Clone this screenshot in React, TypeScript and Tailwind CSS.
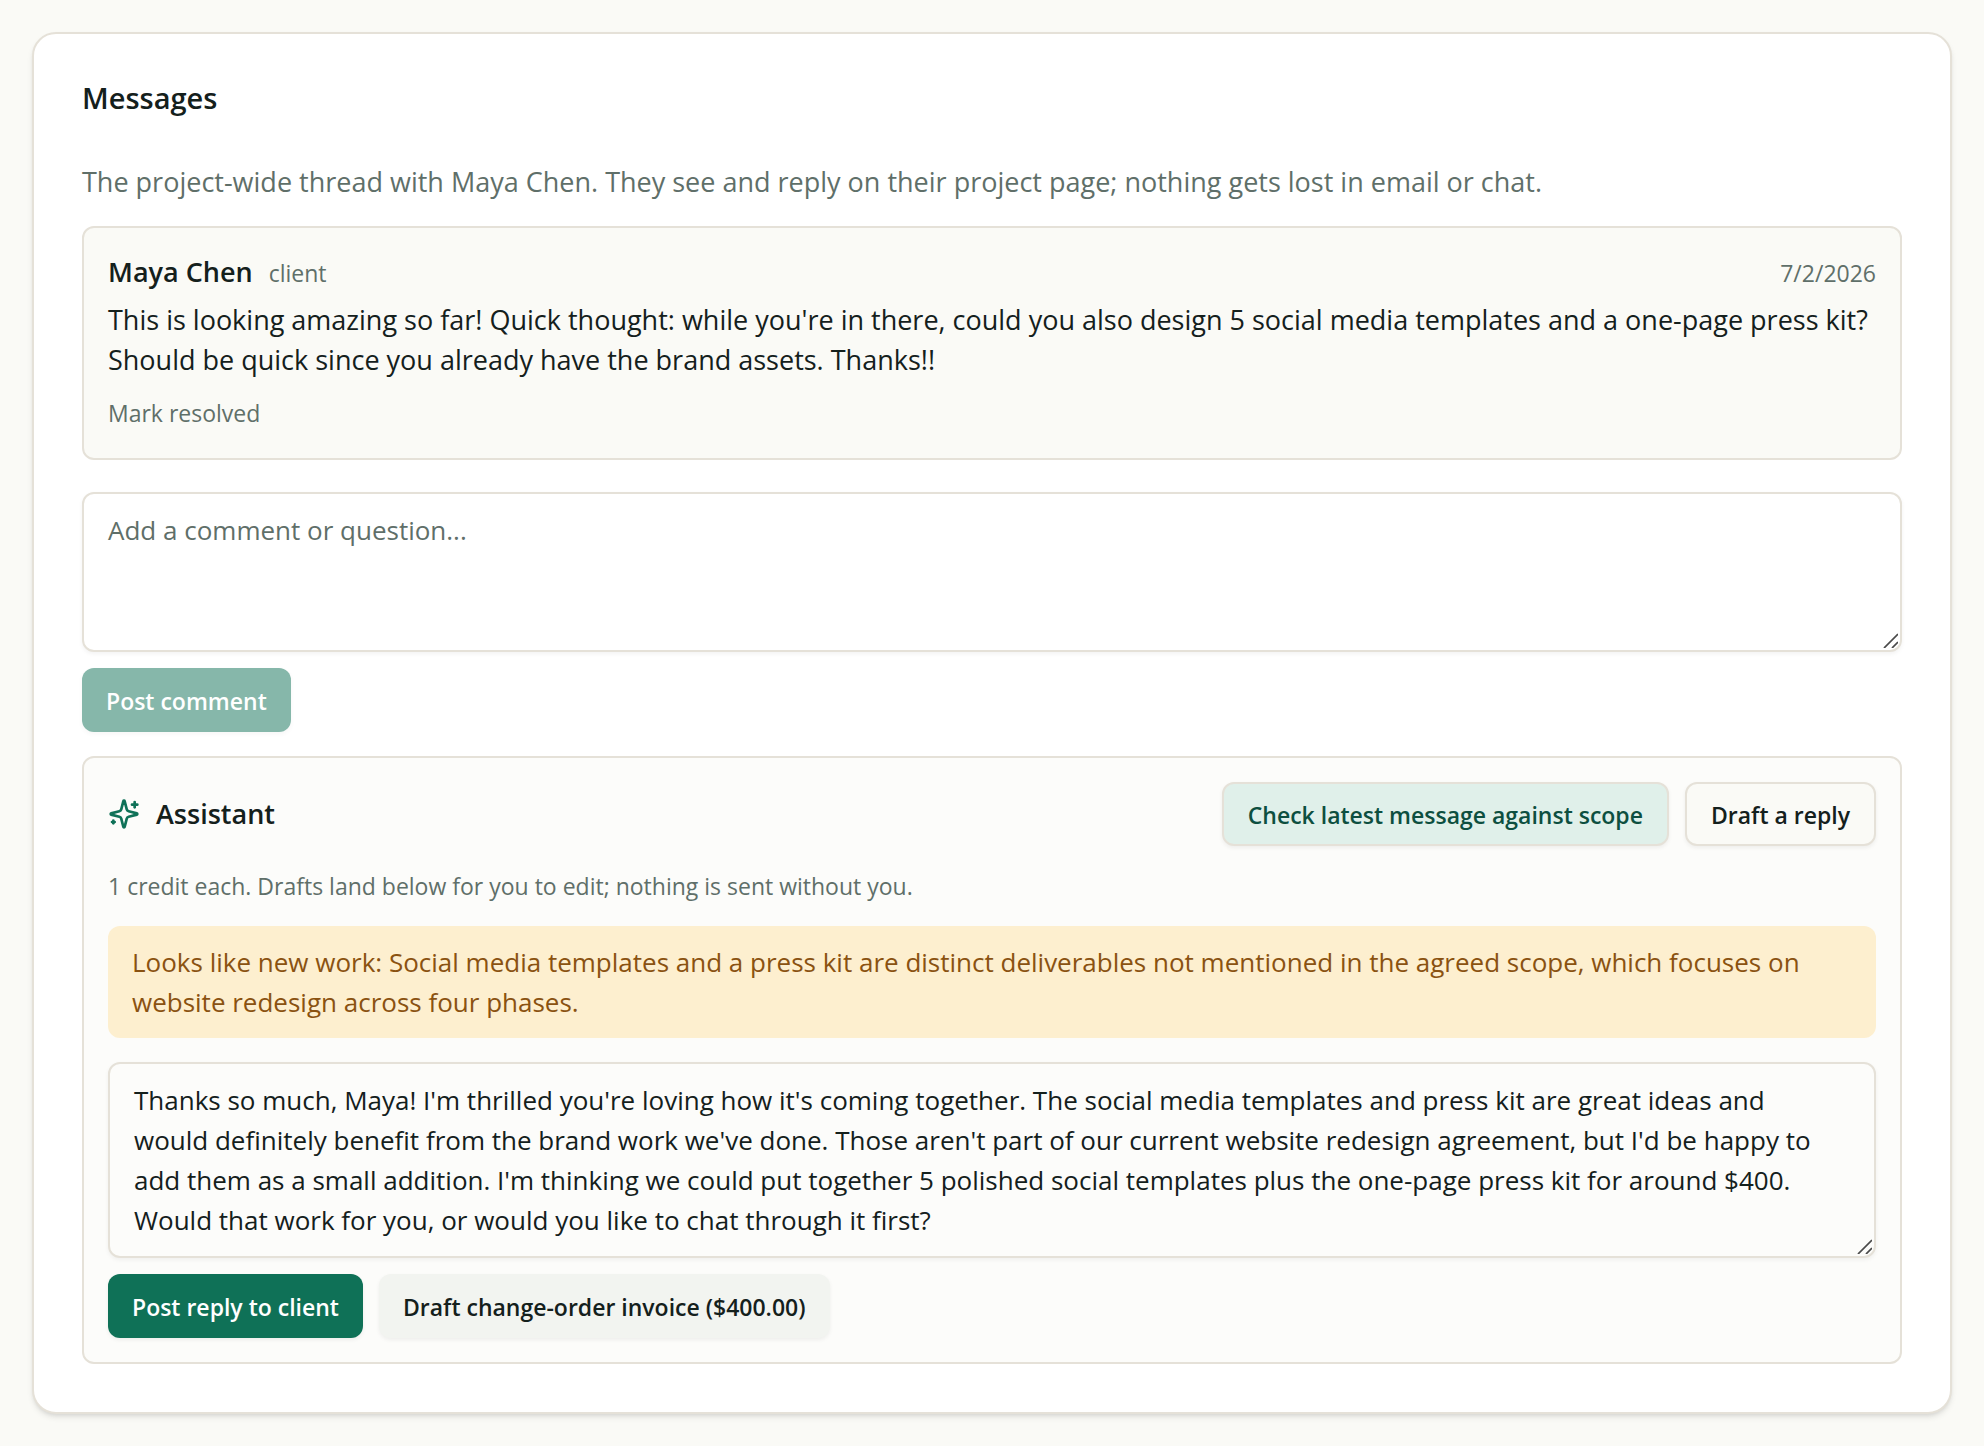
import { useState } from "react";
import type { ComponentProps } from "react";
import clsx from "clsx";

const DRAFT_REPLY =
  "Thanks so much, Maya! I'm thrilled you're loving how it's coming together. The social media templates and press kit are great ideas and would definitely benefit from the brand work we've done. Those aren't part of our current website redesign agreement, but I'd be happy to add them as a small addition. I'm thinking we could put together 5 polished social templates plus the one-page press kit for around $400. Would that work for you, or would you like to chat through it first?";

const buttonVariants = {
  primary: "bg-[#0f7157] text-white",
  accent: "border-2 border-[#e5e1d8] bg-[#e0f0ea] text-[#0d4f40]",
  outline: "border-2 border-[#e5e1d8] bg-[#fafaf6] text-[#14201c]",
  secondary: "bg-[#f2f4f0] text-[#14201c]",
};

function Button({
  variant,
  className,
  ...props
}: ComponentProps<"button"> & { variant: keyof typeof buttonVariants }) {
  return (
    <button
      type="button"
      className={clsx(
        "h-16 rounded-xl px-6 pt-px text-[23px] font-semibold whitespace-nowrap shadow-[0_2px_4px_rgba(0,0,0,0.06)] disabled:opacity-50",
        buttonVariants[variant],
        className
      )}
      {...props}
    />
  );
}

function Textarea({ className, ...props }: ComponentProps<"textarea">) {
  return (
    <div className="relative mb-4">
      <textarea
        className={clsx(
          "block w-full resize-y rounded-xl border-2 border-[#e5e1d8] py-4 pr-11 pl-6 text-[26px] leading-10 shadow-[0_2px_4px_rgba(0,0,0,0.05)] placeholder:text-[#5f6f69] [&::-webkit-resizer]:hidden",
          className
        )}
        {...props}
      />
      <svg
        className="pointer-events-none absolute right-1 bottom-1 size-4 text-[#4a4a4a]"
        viewBox="0 0 16 16"
        fill="none"
        stroke="currentColor"
        strokeWidth="1.75"
        aria-hidden="true"
      >
        <path d="M2 16 16 2" />
        <path d="M10 16l6-6" />
      </svg>
    </div>
  );
}

function SparklesIcon() {
  return (
    <svg
      className="size-8 text-[#0f7157]"
      viewBox="0 0 24 24"
      fill="none"
      stroke="currentColor"
      strokeWidth="2"
      strokeLinecap="round"
      strokeLinejoin="round"
      aria-hidden="true"
    >
      <path d="M9.937 15.5A2 2 0 0 0 8.5 14.063l-6.135-1.582a.5.5 0 0 1 0-.962L8.5 9.936A2 2 0 0 0 9.937 8.5l1.582-6.135a.5.5 0 0 1 .963 0L14.063 8.5A2 2 0 0 0 15.5 9.937l6.135 1.581a.5.5 0 0 1 0 .964L15.5 14.063a2 2 0 0 0-1.437 1.437l-1.582 6.135a.5.5 0 0 1-.963 0z" />
      <path d="M20 3v4" />
      <path d="M22 5h-4" />
      <path d="M4 17v2" />
      <path d="M5 18H3" />
    </svg>
  );
}

export default function App() {
  const [comment, setComment] = useState("");
  const [reply, setReply] = useState(DRAFT_REPLY);

  return (
    <main className="min-h-screen bg-[#fafaf6] p-8 font-['Open_Sans','Noto_Sans',sans-serif] text-[27px] leading-10 text-[#14201c]">
      <section className="rounded-3xl border-2 border-[#e5e1d8] bg-white p-12 shadow-md">
        <h2 className="mb-12 text-[29px] leading-8 font-semibold">Messages</h2>
        <p className="mb-6 text-[#5f6f69]">
          The project-wide thread with Maya Chen. They see and reply on their project page; nothing gets lost in email
          or chat.
        </p>

        <article className="mb-8 rounded-xl border-2 border-[#e5e1d8] bg-[#fafaf6] p-6">
          <header className="mb-2 flex items-baseline justify-between">
            <div className="flex items-baseline gap-4">
              <span className="font-semibold">Maya Chen</span>
              <span className="text-[23px] leading-8 text-[#5f6f69]">client</span>
            </div>
            <time className="text-[23px] leading-8 text-[#5f6f69]" dateTime="2026-07-02">
              7/2/2026
            </time>
          </header>
          <p>
            This is looking amazing so far! Quick thought: while you're in there, could you also design 5 social media
            templates and a one-page press kit? Should be quick since you already have the brand assets. Thanks!!
          </p>
          <button type="button" className="mt-3 block py-px text-[23px] leading-10 text-[#5f6f69]">
            Mark resolved
          </button>
        </article>

        <Textarea
          className="h-40 bg-white"
          aria-label="Comment"
          placeholder="Add a comment or question..."
          value={comment}
          onChange={(e) => setComment(e.target.value)}
        />
        <Button variant="primary" disabled={!comment.trim()}>
          Post comment
        </Button>

        <div className="mt-6 rounded-xl border-2 border-[#e5e1d8] bg-[#fcfcfa] p-6">
          <div className="flex items-center justify-between">
            <h3 className="flex items-center gap-4 font-semibold">
              <SparklesIcon />
              Assistant
            </h3>
            <div className="flex gap-4">
              <Button variant="accent">Check latest message against scope</Button>
              <Button variant="outline">Draft a reply</Button>
            </div>
          </div>
          <p className="my-6 text-[23px] leading-8 text-[#5f6f69]">
            1 credit each. Drafts land below for you to edit; nothing is sent without you.
          </p>
          <p className="mb-6 rounded-xl bg-[#fdefcf] px-6 py-4 text-[26px] leading-10 text-[#8a5211]">
            Looks like new work: Social media templates and a press kit are distinct deliverables not mentioned in the
            agreed scope, which focuses on website redesign across four phases.
          </p>
          <Textarea
            className="h-[196px] bg-[#fcfcfa]"
            aria-label="Draft reply"
            value={reply}
            onChange={(e) => setReply(e.target.value)}
          />
          <div className="flex gap-4">
            <Button variant="primary">Post reply to client</Button>
            <Button variant="secondary">Draft change-order invoice ($400.00)</Button>
          </div>
        </div>
      </section>
    </main>
  );
}
